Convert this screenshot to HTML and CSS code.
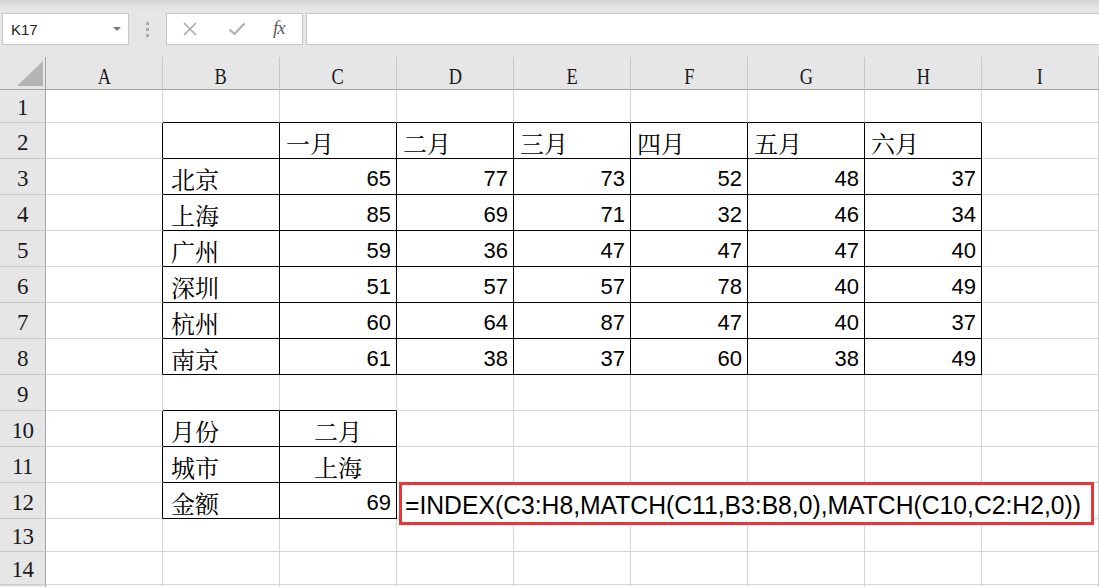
FILE: index.html
```html
<!DOCTYPE html>
<html lang="zh-CN">
<head>
<meta charset="utf-8">
<title>Excel INDEX MATCH</title>
<link rel="stylesheet" href="styles.css">
</head>
<body>
<div class="toolbar">
  <div class="namebox"><span class="nb-text">K17</span><span class="nb-arrow"></span></div>
  <div class="dots"><i></i><i></i><i></i></div>
  <div class="fxbox">
    <svg class="ico-x" width="14" height="14" viewBox="0 0 14 14"><path d="M1 1 L13 13 M13 1 L1 13" stroke="#a9a9a9" stroke-width="1.6" fill="none"/></svg>
    <svg class="ico-ok" width="18" height="14" viewBox="0 0 18 14"><path d="M1.5 7.5 L6.5 12 L16.5 1.5" stroke="#b0b0b0" stroke-width="2.2" fill="none"/></svg>
    <span class="fx">fx</span>
  </div>
  <div class="finput"></div>
</div>
<div class="sheet">
  <!-- header row -->
  <div class="corner"><svg width="26" height="25" viewBox="0 0 26 25"><polygon points="26,0 26,25 0,25" fill="#b4b4b4"/></svg></div>
  <div class="ch"><span>A</span></div><div class="ch"><span>B</span></div><div class="ch"><span>C</span></div><div class="ch"><span>D</span></div><div class="ch"><span>E</span></div><div class="ch"><span>F</span></div><div class="ch"><span>G</span></div><div class="ch"><span>H</span></div><div class="ch"><span>I</span></div>
  <!-- row 1 -->
  <div class="rh">1</div><div class="c"></div><div class="c tt"></div><div class="c tt"></div><div class="c tt"></div><div class="c tt"></div><div class="c tt"></div><div class="c tt"></div><div class="c tt"></div><div class="c"></div>
  <!-- row 2 -->
  <div class="rh">2</div><div class="c tl"></div><div class="c t"></div><div class="c t zh">一月</div><div class="c t zh">二月</div><div class="c t zh">三月</div><div class="c t zh">四月</div><div class="c t zh">五月</div><div class="c t zh">六月</div><div class="c"></div>
  <!-- row 3 -->
  <div class="rh">3</div><div class="c tl"></div><div class="c t zh city">北京</div><div class="c t n">65</div><div class="c t n">77</div><div class="c t n">73</div><div class="c t n">52</div><div class="c t n">48</div><div class="c t n">37</div><div class="c"></div>
  <!-- row 4 -->
  <div class="rh">4</div><div class="c tl"></div><div class="c t zh city">上海</div><div class="c t n">85</div><div class="c t n">69</div><div class="c t n">71</div><div class="c t n">32</div><div class="c t n">46</div><div class="c t n">34</div><div class="c"></div>
  <!-- row 5 -->
  <div class="rh">5</div><div class="c tl"></div><div class="c t zh city">广州</div><div class="c t n">59</div><div class="c t n">36</div><div class="c t n">47</div><div class="c t n">47</div><div class="c t n">47</div><div class="c t n">40</div><div class="c"></div>
  <!-- row 6 -->
  <div class="rh">6</div><div class="c tl"></div><div class="c t zh city">深圳</div><div class="c t n">51</div><div class="c t n">57</div><div class="c t n">57</div><div class="c t n">78</div><div class="c t n">40</div><div class="c t n">49</div><div class="c"></div>
  <!-- row 7 -->
  <div class="rh">7</div><div class="c tl"></div><div class="c t zh city">杭州</div><div class="c t n">60</div><div class="c t n">64</div><div class="c t n">87</div><div class="c t n">47</div><div class="c t n">40</div><div class="c t n">37</div><div class="c"></div>
  <!-- row 8 -->
  <div class="rh">8</div><div class="c tl"></div><div class="c t zh city">南京</div><div class="c t n">61</div><div class="c t n">38</div><div class="c t n">37</div><div class="c t n">60</div><div class="c t n">38</div><div class="c t n">49</div><div class="c"></div>
  <!-- row 9 -->
  <div class="rh">9</div><div class="c"></div><div class="c tt"></div><div class="c tt"></div><div class="c"></div><div class="c"></div><div class="c"></div><div class="c"></div><div class="c"></div><div class="c"></div>
  <!-- row 10 -->
  <div class="rh">10</div><div class="c tl"></div><div class="c t zh city">月份</div><div class="c t zh mid">二月</div><div class="c"></div><div class="c"></div><div class="c"></div><div class="c"></div><div class="c"></div><div class="c"></div>
  <!-- row 11 -->
  <div class="rh">11</div><div class="c tl"></div><div class="c t zh city">城市</div><div class="c t zh mid">上海</div><div class="c"></div><div class="c"></div><div class="c"></div><div class="c"></div><div class="c"></div><div class="c"></div>
  <!-- row 12 -->
  <div class="rh">12</div><div class="c tl"></div><div class="c t zh city">金额</div><div class="c t n">69</div><div class="c"></div><div class="c"></div><div class="c"></div><div class="c"></div><div class="c"></div><div class="c"></div>
  <!-- row 13 -->
  <div class="rh">13</div><div class="c"></div><div class="c"></div><div class="c"></div><div class="c"></div><div class="c"></div><div class="c"></div><div class="c"></div><div class="c"></div><div class="c"></div>
  <!-- row 14 -->
  <div class="rh">14</div><div class="c"></div><div class="c"></div><div class="c"></div><div class="c"></div><div class="c"></div><div class="c"></div><div class="c"></div><div class="c"></div><div class="c"></div>
  <!-- row 15 (only its top edge is visible) -->
  <div class="rh"></div><div class="c"></div><div class="c"></div><div class="c"></div><div class="c"></div><div class="c"></div><div class="c"></div><div class="c"></div><div class="c"></div><div class="c"></div>

  <div class="formula"><span>=INDEX(C3:H8,MATCH(C11,B3:B8,0),MATCH(C10,C2:H2,0))</span></div>
</div>
</body>
</html>
```

FILE: styles.css
```css
html, body {
  margin: 0;
  padding: 0;
  background: #ffffff;
  overflow: hidden;
}
body {
  width: 1099px;
  height: 587px;
  font-family: "Liberation Sans", Arial, sans-serif;
}

/* ---------- formula bar ---------- */
.toolbar {
  height: 57px;
  box-sizing: border-box;
  padding: 13px 0 0 2px;
  display: flex;
  align-items: flex-start;
  background: linear-gradient(#d3d3d3 0px, #e2e2e2 6px, #e6e6e6 12px, #e6e6e6 100%);
}
.namebox {
  width: 127px;
  height: 32px;
  box-sizing: border-box;
  border: 1px solid #c6c6c6;
  background: #ffffff;
  display: flex;
  align-items: center;
  justify-content: space-between;
  padding: 0 7px 0 8px;
}
.nb-text {
  font-family: "Liberation Sans", Arial, sans-serif;
  font-size: 15px;
  color: #222;
}
.nb-arrow {
  width: 0;
  height: 0;
  border-left: 4px solid transparent;
  border-right: 4px solid transparent;
  border-top: 4px solid #7a7a7a;
}
.dots {
  width: 37px;
  height: 32px;
  display: flex;
  flex-direction: column;
  align-items: center;
  justify-content: center;
  gap: 3px;
}
.dots i {
  display: block;
  width: 3px;
  height: 3px;
  background: #a9a9a9;
}
.fxbox {
  width: 137px;
  height: 32px;
  box-sizing: border-box;
  border: 1px solid #c6c6c6;
  background: #ffffff;
  display: flex;
  align-items: center;
  padding-left: 16px;
}
.ico-x { margin-right: 31px; }
.ico-ok { margin-right: 27px; }
.fx {
  font-family: "Liberation Serif", "Times New Roman", serif;
  font-style: italic;
  font-size: 19px;
  color: #5f5f5f;
  letter-spacing: -1px;
  margin-top: -3px;
}
.finput {
  margin-left: 3px;
  flex: 1;
  height: 32px;
  box-sizing: border-box;
  border: 1px solid #c6c6c6;
  border-right: none;
  background: #ffffff;
}

/* ---------- sheet grid ---------- */
.sheet {
  position: relative;
  display: grid;
  grid-template-columns: 46px repeat(9, 117px);
  grid-template-rows: 33px 33px repeat(11, 36px) 33px 33px 33px;
}
.corner {
  background: #e6e6e6;
  box-sizing: border-box;
  border-right: 1px solid #a3a3a3;
  border-bottom: 1px solid #a3a3a3;
  display: flex;
  align-items: flex-end;
  padding: 0 0 3px 17px;
}
.corner svg { display: block; }
.ch {
  background: #e6e6e6;
  box-sizing: border-box;
  border-right: 1px solid #c8c8c8;
  border-bottom: 1px solid #a3a3a3;
  display: flex;
  justify-content: center;
  align-items: flex-end;
  font-family: "Liberation Serif", "Times New Roman", serif;
  font-size: 23px;
  line-height: 24px;
  color: #1a1a1a;
}
.ch span {
  display: inline-block;
  transform: scaleX(0.8);
}
.rh {
  background: #e6e6e6;
  box-sizing: border-box;
  border-right: 1px solid #a3a3a3;
  border-bottom: 1px solid #c8c8c8;
  display: flex;
  justify-content: center;
  align-items: center;
  padding-top: 4px;
  font-family: "Liberation Serif", "Times New Roman", serif;
  font-size: 23px;
  line-height: 24px;
  color: #1a1a1a;
  letter-spacing: -0.5px;
}
.c {
  box-sizing: border-box;
  border-right: 1px solid #d4d4d4;
  border-bottom: 1px solid #d4d4d4;
  background: #ffffff;
  display: flex;
  align-items: flex-end;
  padding-bottom: 2px;
  line-height: 26px;
  white-space: nowrap;
  color: #000;
}
/* black table borders */
.c.t { border-right-color: #000; border-bottom-color: #000; }
.c.tt { border-bottom-color: #000; }
.c.tl { border-right-color: #000; }

.zh {
  font-family: "Noto Serif CJK SC", "Noto Sans CJK SC", serif;
  font-size: 24px;
  padding-left: 6px;
}
.city { padding-left: 8px; }
.mid { justify-content: center; padding-left: 0; }
.n {
  justify-content: flex-end;
  padding-right: 5px;
  font-family: "Liberation Sans", Arial, sans-serif;
  font-size: 22px;
}

/* ---------- annotated formula ---------- */
.formula {
  position: absolute;
  left: 399px;
  top: 425px;
  width: 695px;
  height: 43px;
  box-sizing: border-box;
  border: 3px solid #e8373c;
  background: #ffffff;
  display: flex;
  align-items: center;
  padding: 2px 0 0 3px;
  overflow: hidden;
}
.formula span {
  display: inline-block;
  white-space: nowrap;
  font-family: "Liberation Sans", Arial, sans-serif;
  font-size: 26px;
  line-height: 30px;
  color: #000;
  transform: scaleX(0.95);
  transform-origin: left center;
}
```
